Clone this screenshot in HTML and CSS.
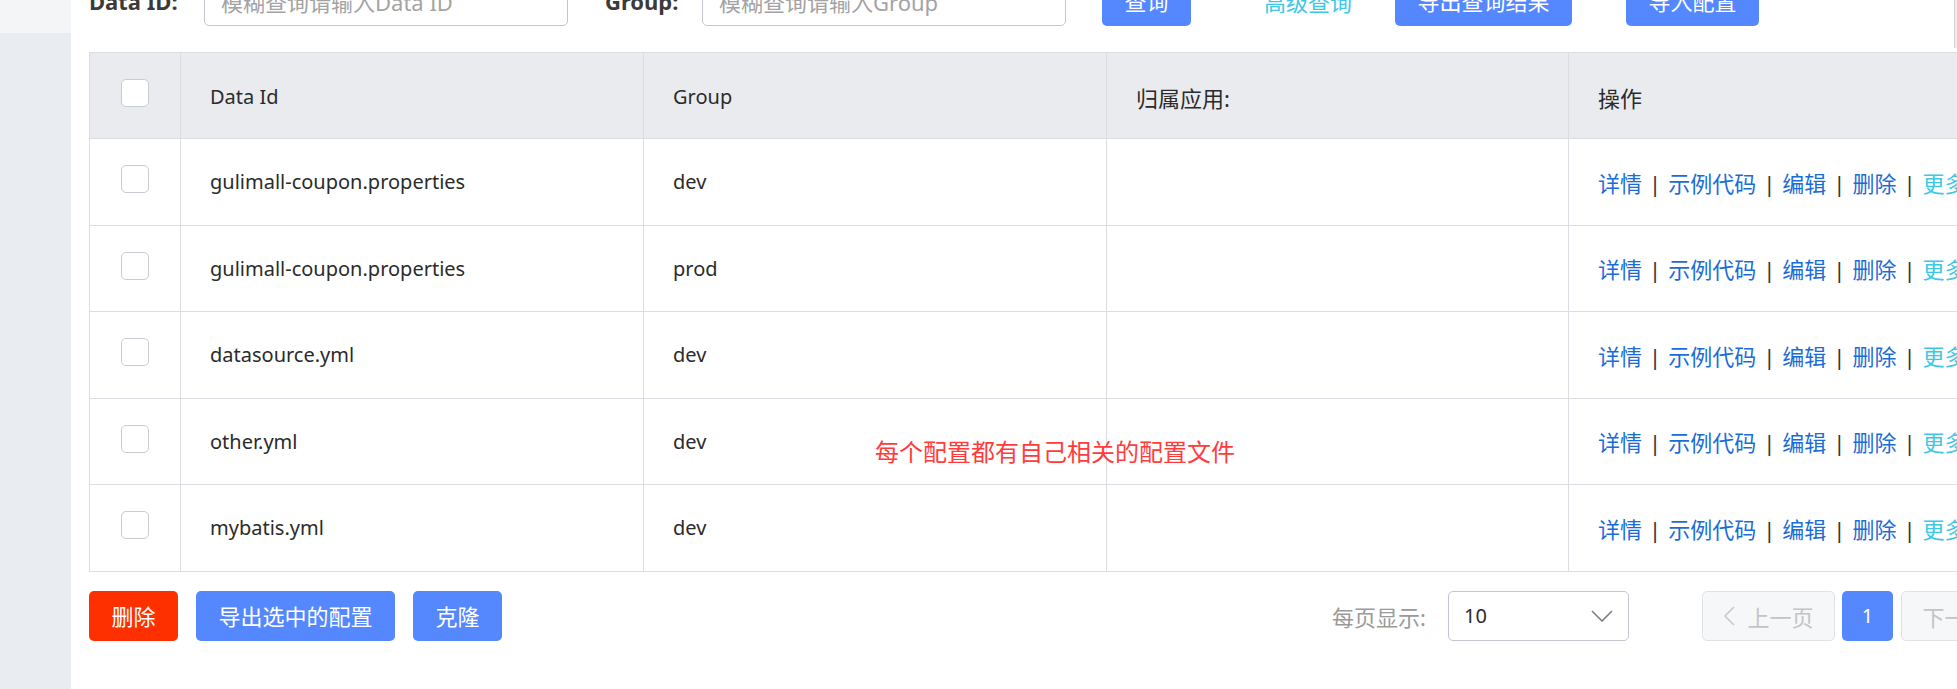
FILE: index.html
```html
<!DOCTYPE html>
<html lang="zh-CN">
<head>
<meta charset="utf-8">
<title>配置管理</title>
<link rel="stylesheet" href="styles.css">
</head>
<body>
<div class="layout">
  <aside class="sidebar"><div class="sidebar-top"></div></aside>
  <main class="main">
    <div class="content">
      <div class="toolbar">
        <label class="field-label label-dataid">Data ID:</label>
        <div class="input"><span class="placeholder">模糊查询请输入Data ID</span></div>
        <label class="field-label label-group">Group:</label>
        <div class="input"><span class="placeholder">模糊查询请输入Group</span></div>
        <button class="btn btn-primary btn-query">查询</button>
        <a class="link-advanced">高级查询</a>
        <button class="btn btn-primary btn-export">导出查询结果</button>
        <button class="btn btn-primary btn-import">导入配置</button>
      </div>

      <div class="table-wrap">
        <table class="grid">
          <colgroup>
            <col class="c-check"><col class="c-id"><col class="c-group"><col class="c-app"><col class="c-op">
          </colgroup>
          <thead>
            <tr>
              <th class="cell-check"><span class="checkbox"></span></th>
              <th class="latin">Data Id</th>
              <th class="latin">Group</th>
              <th class="cjk">归属应用:</th>
              <th class="cjk">操作</th>
            </tr>
          </thead>
          <tbody>
            <tr>
              <td class="cell-check"><span class="checkbox"></span></td>
              <td class="latin">gulimall-coupon.properties</td>
              <td class="latin">dev</td>
              <td></td>
              <td class="ops"><a class="op">详情</a><span class="sep">|</span><a class="op">示例代码</a><span class="sep">|</span><a class="op">编辑</a><span class="sep">|</span><a class="op">删除</a><span class="sep">|</span><a class="op op-more">更多</a></td>
            </tr>
            <tr>
              <td class="cell-check"><span class="checkbox"></span></td>
              <td class="latin">gulimall-coupon.properties</td>
              <td class="latin">prod</td>
              <td></td>
              <td class="ops"><a class="op">详情</a><span class="sep">|</span><a class="op">示例代码</a><span class="sep">|</span><a class="op">编辑</a><span class="sep">|</span><a class="op">删除</a><span class="sep">|</span><a class="op op-more">更多</a></td>
            </tr>
            <tr>
              <td class="cell-check"><span class="checkbox"></span></td>
              <td class="latin">datasource.yml</td>
              <td class="latin">dev</td>
              <td></td>
              <td class="ops"><a class="op">详情</a><span class="sep">|</span><a class="op">示例代码</a><span class="sep">|</span><a class="op">编辑</a><span class="sep">|</span><a class="op">删除</a><span class="sep">|</span><a class="op op-more">更多</a></td>
            </tr>
            <tr>
              <td class="cell-check"><span class="checkbox"></span></td>
              <td class="latin">other.yml</td>
              <td class="latin">dev</td>
              <td></td>
              <td class="ops"><a class="op">详情</a><span class="sep">|</span><a class="op">示例代码</a><span class="sep">|</span><a class="op">编辑</a><span class="sep">|</span><a class="op">删除</a><span class="sep">|</span><a class="op op-more">更多</a></td>
            </tr>
            <tr>
              <td class="cell-check"><span class="checkbox"></span></td>
              <td class="latin">mybatis.yml</td>
              <td class="latin">dev</td>
              <td></td>
              <td class="ops"><a class="op">详情</a><span class="sep">|</span><a class="op">示例代码</a><span class="sep">|</span><a class="op">编辑</a><span class="sep">|</span><a class="op">删除</a><span class="sep">|</span><a class="op op-more">更多</a></td>
            </tr>
          </tbody>
        </table>
        <div class="note">每个配置都有自己相关的配置文件</div>
      </div>

      <div class="footer">
        <div class="footer-actions">
          <button class="btn btn-danger">删除</button>
          <button class="btn btn-primary">导出选中的配置</button>
          <button class="btn btn-primary">克隆</button>
        </div>
        <div class="pager">
          <span class="pager-label">每页显示:</span>
          <div class="select">
            <span class="select-value">10</span>
            <svg class="select-arrow" width="22" height="12" viewBox="0 0 22 12"><path d="M1 1 L11 11 L21 1" fill="none" stroke="#7d7d85" stroke-width="1.6"/></svg>
          </div>
          <button class="page-btn page-nav">
            <svg width="12" height="20" viewBox="0 0 12 20"><path d="M11 1 L2 10 L11 19" fill="none" stroke="#c8c8c8" stroke-width="1.6"/></svg>
            <span>上一页</span>
          </button>
          <button class="page-btn page-current">1</button>
          <button class="page-btn page-nav">
            <span>下一页</span>
            <svg width="12" height="20" viewBox="0 0 12 20"><path d="M1 1 L10 10 L1 19" fill="none" stroke="#c8c8c8" stroke-width="1.6"/></svg>
          </button>
        </div>
      </div>
    </div>
  </main>
</div>
<div class="scrollbar"></div>
</body>
</html>
```

FILE: styles.css
```css
html, body {
  margin: 0;
  padding: 0;
  height: 689px;
  overflow: hidden;
  background: #ffffff;
  font-family: "Noto Sans", "Noto Sans CJK SC", sans-serif;
  color: #2b2b2b;
}

.layout {
  display: flex;
  height: 689px;
}

.sidebar {
  width: 71px;
  flex-shrink: 0;
  background: #e9ecf0;
}

.sidebar-top {
  height: 33px;
  background: #f4f5f7;
}

.main {
  flex: 1;
  min-width: 0;
  overflow: hidden;
  padding-left: 18px;
  background: #ffffff;
}

.content {
  width: 1945px;
  flex-shrink: 0;
}

/* toolbar */
.toolbar {
  display: flex;
  align-items: center;
  height: 50px;
  margin-top: -24px;
}

.field-label {
  font-size: 22px;
  font-weight: 700;
  color: #3a3a3a;
  white-space: nowrap;
}

.label-dataid { width: 115px; }
.label-group { width: 97px; margin-left: 37px; }

.input {
  box-sizing: border-box;
  width: 364px;
  height: 50px;
  border: 1px solid #c4c6cf;
  border-radius: 5px;
  display: flex;
  align-items: center;
  padding-left: 16px;
}

.placeholder {
  font-size: 22px;
  color: #a3a3a3;
  white-space: nowrap;
}

.btn {
  box-sizing: border-box;
  height: 50px;
  padding: 0 22.5px;
  border: none;
  border-radius: 5px;
  font-family: "Noto Sans", "Noto Sans CJK SC", sans-serif;
  font-size: 22px;
  color: #ffffff;
  white-space: nowrap;
  line-height: 50px;
}

.btn-primary { background: #5588ff; }
.btn-danger { background: #ff3000; }

.btn-query { margin-left: 36px; }

.link-advanced {
  margin-left: 73px;
  font-size: 22px;
  color: #3cc8e6;
  white-space: nowrap;
}

.btn-export { margin-left: 43px; }
.btn-import { margin-left: 54px; }

/* table */
.table-wrap {
  position: relative;
  margin-top: 26px;
}

.grid {
  width: 1945px;
  table-layout: fixed;
  border-collapse: collapse;
  border: 1px solid #dcdde3;
}

.c-check { width: 91px; }
.c-id { width: 463px; }
.c-group { width: 463px; }
.c-app { width: 462px; }
.c-op { width: 466px; }

.grid th,
.grid td {
  border: 1px solid #dcdde3;
  padding: 0 0 0 29px;
  text-align: left;
  vertical-align: middle;
  white-space: nowrap;
  overflow: hidden;
}

.grid thead tr { height: 86px; }
.grid tbody tr { height: 86.5px; }

.grid th {
  background: #eaebef;
  font-weight: 400;
  color: #2b2b2b;
  padding-top: 2px;
}

.latin { font-size: 20px; }
.cjk { font-size: 22px; }

.grid .cell-check {
  padding: 0;
  text-align: center;
}

.checkbox {
  display: inline-block;
  box-sizing: border-box;
  width: 28px;
  height: 28px;
  border: 1px solid #c9cbd2;
  border-radius: 5px;
  background: #ffffff;
  vertical-align: middle;
  margin-bottom: 5px;
}

.ops {
  font-size: 22px;
}

.op { color: #1a6dd8; }
.op-more { color: #3cc8e6; }

.sep {
  color: #333333;
  margin: 0 7px;
}

.note {
  position: absolute;
  left: 786px;
  top: 388px;
  font-size: 24px;
  line-height: 24px;
  color: #ff3b3b;
  white-space: nowrap;
}

/* footer */
.footer {
  margin-top: 19px;
  height: 50px;
  display: flex;
  justify-content: space-between;
  align-items: center;
}

.footer-actions {
  display: flex;
  gap: 18px;
}

.pager {
  display: flex;
  align-items: center;
}

.pager-label {
  font-size: 22px;
  color: #9a9a9a;
  margin-right: 22px;
  white-space: nowrap;
}

.select {
  box-sizing: border-box;
  width: 181px;
  height: 50px;
  border: 1px solid #c4c6cf;
  border-radius: 5px;
  display: flex;
  align-items: center;
  justify-content: space-between;
  padding: 0 15px 0 15px;
}

.select-value {
  font-size: 20px;
  color: #2b2b2b;
}

.page-btn {
  box-sizing: border-box;
  height: 50px;
  border-radius: 5px;
  font-family: "Noto Sans", "Noto Sans CJK SC", sans-serif;
  font-size: 22px;
  display: flex;
  align-items: center;
  justify-content: center;
  gap: 12px;
  padding: 0;
}

.page-nav {
  width: 133px;
  background: #f6f7f9;
  border: 1px solid #e1e2e6;
  color: #c4c4c4;
}

.page-nav:first-of-type { margin-left: 73px; }

.page-current {
  width: 51px;
  margin: 0 8px 0 7px;
  background: #5588ff;
  border: none;
  color: #ffffff;
  font-size: 20px;
}

.scrollbar {
  position: absolute;
  top: 0;
  right: 0;
  width: 2px;
  height: 48px;
  border-left: 1px solid #d4d4d4;
  background: #ececec;
}
```
